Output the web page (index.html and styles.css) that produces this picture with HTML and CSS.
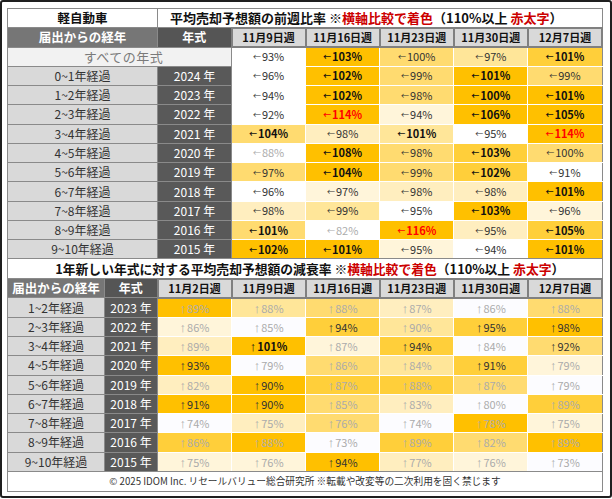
FILE: index.html
```html
<!DOCTYPE html>
<html lang="ja">
<head>
<meta charset="utf-8">
<title>軽自動車 平均売却予想額</title>
<link rel="stylesheet" href="styles.css">
</head>
<body>
<div class="frame">
  <div class="sheet">
    <table class="tbl t1">
      <colgroup><col class="w-lab1"><col class="w-yr1"><col><col><col><col><col></colgroup>
      <tr>
        <td class="cat">軽自動車</td>
        <td class="ttl ttl1" colspan="6">平均売却予想額の前週比率 ※<span class="red">横軸比較で着色</span>（110%以上 <span class="red">赤太字</span>）</td>
      </tr>
      <tr>
        <td class="hl">届出からの経年</td><td class="hy">年式</td>
        <td class="hd">11月9日週</td><td class="hd">11月16日週</td><td class="hd">11月23日週</td><td class="hd">11月30日週</td><td class="hd">12月7日週</td>
      </tr>
      <tr>
        <td class="all" colspan="2">すべての年式</td>
        <td class="d c0 n"><span class="ar">←</span>93%</td><td class="d c6 b"><span class="ar">←</span>103%</td><td class="d c4 n"><span class="ar">←</span>100%</td><td class="d c3 n"><span class="ar">←</span>97%</td><td class="d c5 b"><span class="ar">←</span>101%</td>
      </tr>
      <tr>
        <td class="lb">0~1年経過</td><td class="yr">2024 年</td>
        <td class="d c0 n"><span class="ar">←</span>96%</td><td class="d c6 b"><span class="ar">←</span>102%</td><td class="d c4 n"><span class="ar">←</span>99%</td><td class="d c6 b"><span class="ar">←</span>101%</td><td class="d c4 n"><span class="ar">←</span>99%</td>
      </tr>
      <tr>
        <td class="lb">1~2年経過</td><td class="yr">2023 年</td>
        <td class="d c0 n"><span class="ar">←</span>94%</td><td class="d c6 b"><span class="ar">←</span>102%</td><td class="d c4 n"><span class="ar">←</span>98%</td><td class="d c6 b"><span class="ar">←</span>100%</td><td class="d c6 b"><span class="ar">←</span>101%</td>
      </tr>
      <tr>
        <td class="lb">2~3年経過</td><td class="yr">2022 年</td>
        <td class="d c0 n"><span class="ar">←</span>92%</td><td class="d c6 r"><span class="ar">←</span>114%</td><td class="d c1 n"><span class="ar">←</span>94%</td><td class="d c6 b"><span class="ar">←</span>106%</td><td class="d c6 b"><span class="ar">←</span>105%</td>
      </tr>
      <tr>
        <td class="lb">3~4年経過</td><td class="yr">2021 年</td>
        <td class="d c4 b"><span class="ar">←</span>104%</td><td class="d c2 n"><span class="ar">←</span>98%</td><td class="d c3 b"><span class="ar">←</span>101%</td><td class="d c0 n"><span class="ar">←</span>95%</td><td class="d c6 r"><span class="ar">←</span>114%</td>
      </tr>
      <tr>
        <td class="lb">4~5年経過</td><td class="yr">2020 年</td>
        <td class="d c0 g"><span class="ar">←</span>88%</td><td class="d c6 b"><span class="ar">←</span>108%</td><td class="d c4 n"><span class="ar">←</span>98%</td><td class="d c5 b"><span class="ar">←</span>103%</td><td class="d c4 n"><span class="ar">←</span>100%</td>
      </tr>
      <tr>
        <td class="lb">5~6年経過</td><td class="yr">2019 年</td>
        <td class="d c4 n"><span class="ar">←</span>97%</td><td class="d c6 b"><span class="ar">←</span>104%</td><td class="d c4 n"><span class="ar">←</span>99%</td><td class="d c5 b"><span class="ar">←</span>102%</td><td class="d c0 n"><span class="ar">←</span>91%</td>
      </tr>
      <tr>
        <td class="lb">6~7年経過</td><td class="yr">2018 年</td>
        <td class="d c0 n"><span class="ar">←</span>96%</td><td class="d c1 n"><span class="ar">←</span>97%</td><td class="d c2 n"><span class="ar">←</span>98%</td><td class="d c2 n"><span class="ar">←</span>98%</td><td class="d c6 b"><span class="ar">←</span>101%</td>
      </tr>
      <tr>
        <td class="lb">7~8年経過</td><td class="yr">2017 年</td>
        <td class="d c2 n"><span class="ar">←</span>98%</td><td class="d c3 n"><span class="ar">←</span>99%</td><td class="d c0 n"><span class="ar">←</span>95%</td><td class="d c6 b"><span class="ar">←</span>103%</td><td class="d c1 n"><span class="ar">←</span>96%</td>
      </tr>
      <tr>
        <td class="lb">8~9年経過</td><td class="yr">2016 年</td>
        <td class="d c4 b"><span class="ar">←</span>101%</td><td class="d c0 g"><span class="ar">←</span>82%</td><td class="d c6 r"><span class="ar">←</span>116%</td><td class="d c2 n"><span class="ar">←</span>95%</td><td class="d c5 b"><span class="ar">←</span>105%</td>
      </tr>
      <tr>
        <td class="lb">9~10年経過</td><td class="yr">2015 年</td>
        <td class="d c6 b"><span class="ar">←</span>102%</td><td class="d c6 b"><span class="ar">←</span>101%</td><td class="d c1 n"><span class="ar">←</span>95%</td><td class="d c0 n"><span class="ar">←</span>94%</td><td class="d c6 b"><span class="ar">←</span>101%</td>
      </tr>
    </table>

    <table class="tbl t2">
      <colgroup><col class="w-lab2"><col class="w-yr2"><col><col><col><col><col><col></colgroup>
      <tr>
        <td class="ttl ttl2" colspan="8">1年新しい年式に対する平均売却予想額の減衰率 ※<span class="red">横軸比較で着色</span>（110%以上 <span class="red">赤太字</span>）</td>
      </tr>
      <tr>
        <td class="hl">届出からの経年</td><td class="hy">年式</td>
        <td class="hd">11月2日週</td><td class="hd">11月9日週</td><td class="hd">11月16日週</td><td class="hd">11月23日週</td><td class="hd">11月30日週</td><td class="hd">12月7日週</td>
      </tr>
      <tr>
        <td class="lb">1~2年経過</td><td class="yr">2023 年</td>
        <td class="d c6 g"><span class="up">↑</span>89%</td><td class="d c3 g"><span class="up">↑</span>88%</td><td class="d c4 g"><span class="up">↑</span>88%</td><td class="d c2 g"><span class="up">↑</span>87%</td><td class="d w g"><span class="up">↑</span>86%</td><td class="d c4 g"><span class="up">↑</span>88%</td>
      </tr>
      <tr>
        <td class="lb">2~3年経過</td><td class="yr">2022 年</td>
        <td class="d c1 g"><span class="up">↑</span>86%</td><td class="d w g"><span class="up">↑</span>85%</td><td class="d c5 n"><span class="up">↑</span>94%</td><td class="d c3 g"><span class="up">↑</span>90%</td><td class="d c5 n"><span class="up">↑</span>95%</td><td class="d c6 n"><span class="up">↑</span>98%</td>
      </tr>
      <tr>
        <td class="lb">3~4年経過</td><td class="yr">2021 年</td>
        <td class="d c2 g"><span class="up">↑</span>89%</td><td class="d c6 b"><span class="up">↑</span>101%</td><td class="d c1 g"><span class="up">↑</span>87%</td><td class="d c5 n"><span class="up">↑</span>94%</td><td class="d w g"><span class="up">↑</span>84%</td><td class="d c4 n"><span class="up">↑</span>92%</td>
      </tr>
      <tr>
        <td class="lb">4~5年経過</td><td class="yr">2020 年</td>
        <td class="d c6 n"><span class="up">↑</span>93%</td><td class="d w g"><span class="up">↑</span>79%</td><td class="d c4 g"><span class="up">↑</span>86%</td><td class="d c3 g"><span class="up">↑</span>84%</td><td class="d c5 n"><span class="up">↑</span>91%</td><td class="d c1 g"><span class="up">↑</span>79%</td>
      </tr>
      <tr>
        <td class="lb">5~6年経過</td><td class="yr">2019 年</td>
        <td class="d c2 g"><span class="up">↑</span>82%</td><td class="d c6 n"><span class="up">↑</span>90%</td><td class="d c5 g"><span class="up">↑</span>87%</td><td class="d c5 g"><span class="up">↑</span>88%</td><td class="d c4 g"><span class="up">↑</span>87%</td><td class="d w g"><span class="up">↑</span>79%</td>
      </tr>
      <tr>
        <td class="lb">6~7年経過</td><td class="yr">2018 年</td>
        <td class="d c6 n"><span class="up">↑</span>91%</td><td class="d c6 n"><span class="up">↑</span>90%</td><td class="d c4 g"><span class="up">↑</span>85%</td><td class="d c2 g"><span class="up">↑</span>83%</td><td class="d w g"><span class="up">↑</span>80%</td><td class="d c5 g"><span class="up">↑</span>89%</td>
      </tr>
      <tr>
        <td class="lb">7~8年経過</td><td class="yr">2017 年</td>
        <td class="d w g"><span class="up">↑</span>74%</td><td class="d c2 g"><span class="up">↑</span>75%</td><td class="d c4 g"><span class="up">↑</span>76%</td><td class="d w g"><span class="up">↑</span>74%</td><td class="d c6 g"><span class="up">↑</span>78%</td><td class="d c1 g"><span class="up">↑</span>75%</td>
      </tr>
      <tr>
        <td class="lb">8~9年経過</td><td class="yr">2016 年</td>
        <td class="d c5 g"><span class="up">↑</span>86%</td><td class="d c6 g"><span class="up">↑</span>88%</td><td class="d w g"><span class="up">↑</span>73%</td><td class="d c5 g"><span class="up">↑</span>89%</td><td class="d c4 g"><span class="up">↑</span>82%</td><td class="d c6 g"><span class="up">↑</span>89%</td>
      </tr>
      <tr>
        <td class="lb">9~10年経過</td><td class="yr">2015 年</td>
        <td class="d c1 g"><span class="up">↑</span>75%</td><td class="d c1 g"><span class="up">↑</span>76%</td><td class="d c6 n"><span class="up">↑</span>94%</td><td class="d c2 g"><span class="up">↑</span>77%</td><td class="d c1 g"><span class="up">↑</span>76%</td><td class="d w g"><span class="up">↑</span>73%</td>
      </tr>
    </table>

    <div class="foot">© 2025 IDOM Inc. リセールバリュー総合研究所 ※転載や改変等の二次利用を固く禁じます</div>
  </div>
</div>
</body>
</html>
```

FILE: styles.css
```css
html, body {
  margin: 0;
  padding: 0;
  background: #ffffff;
}

body {
  font-family: "Noto Sans CJK JP", "Noto Sans", sans-serif;
  color: #222;
}

.frame {
  box-sizing: border-box;
  width: 612px;
  height: 498px;
  border: 2px solid #1f1f1f;
  border-radius: 3px;
  padding: 6px 7px 6px 5px;
  background: #fff;
}

.sheet {
  width: 596px;
  display: flex;
  flex-direction: column;
}

.tbl {
  width: 596px;
  border-collapse: collapse;
  table-layout: fixed;
}

.tbl tr {
  height: 19.28px;
}

.w-lab1 { width: 150px; }
.w-yr1 { width: 74px; }
.w-lab2 { width: 97px; }
.w-yr2 { width: 53px; }

.tbl td {
  border: 1px solid #8a8a8a;
  padding: 0;
  text-align: center;
  vertical-align: middle;
  white-space: nowrap;
  overflow: hidden;
  line-height: 16px;
}

.t2 tr:first-child td {
  border-top: 0;
}

.cat {
  background: #fff;
  font-weight: 700;
  font-size: 12.5px;
  color: #111;
}

.ttl {
  background: #fff;
  font-weight: 700;
  font-size: 13px;
  color: #111;
}

.ttl1 {
  text-align: left !important;
  padding-left: 12px !important;
}

.ttl2 {
  font-size: 12.8px;
  padding-left: 10px !important;
}

.red {
  color: #cc0000;
}

.hl {
  background: #767676;
  color: #fff;
  font-weight: 700;
  font-size: 12.5px;
}

.hy {
  background: #555555;
  color: #fff;
  font-weight: 700;
  font-size: 12px;
}

.tbl td.hd {
  background: #d9d9d9;
  color: #111;
  font-weight: 700;
  font-size: 11px;
  border: 2px solid #808080;
}

.all {
  background: #f2f2f2;
  color: #7a7a7a;
  font-size: 13px;
  letter-spacing: 0.5px;
  padding-left: 8px !important;
}

.lb {
  background: #d9d9d9;
  color: #333;
  font-size: 12px;
}

.yr {
  background: #595959;
  color: #fff;
  font-size: 12px;
}

.tbl td.d {
  border-color: #ffffff;
  font-size: 11px;
}

.tbl td.d:last-child {
  border-right-color: #8a8a8a;
}

.tbl tr:last-child td.d {
  border-bottom-color: #8a8a8a;
}

.c0 { background: #ffffff; }
.w { background: #fcfcff; }
.c1 { background: #fff5da; }
.c2 { background: #ffeebf; }
.c3 { background: #ffe699; }
.c4 { background: #ffdb70; }
.c5 { background: #ffcf3a; }
.c6 { background: #ffc000; }

.n { color: #333; }
.b { color: #111; font-weight: 700; }
.g { color: #ababab; }
.r { color: #ff0000; font-weight: 700; }

.ar {
  font-size: 8px;
  margin-right: 1px;
  vertical-align: 1px;
}

.up {
  font-family: "Liberation Sans", "DejaVu Sans", sans-serif;
  font-size: 13px;
  line-height: 12px;
  margin-right: 1px;
}

.foot {
  box-sizing: border-box;
  height: 20px;
  border: 1px solid #8a8a8a;
  border-top: 0;
  font-size: 9.7px;
  line-height: 18px;
  text-align: center;
  color: #333;
}
```
